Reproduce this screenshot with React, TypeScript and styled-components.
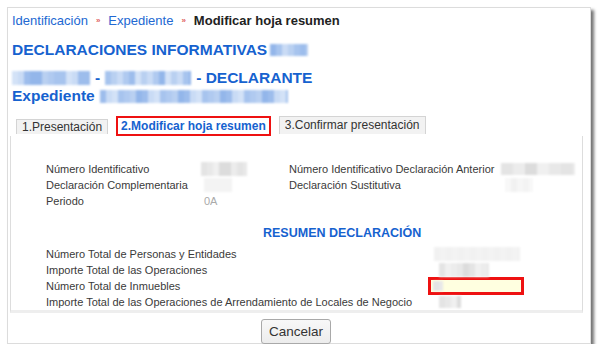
import React from "react"
import styled, { createGlobalStyle } from "styled-components"

const GlobalStyle = createGlobalStyle`
  html, body {
    margin: 0;
    padding: 0;
    background: #ffffff;
    font-family: "Liberation Sans", Arial, sans-serif;
  }
`

const BLUE = "#1662cf"

const blueTones = ["#b9d0f1", "#a7c4ee", "#c9dbf5", "#93b6ea", "#b0caf0", "#d3e2f7", "#9dbdec"]
const grayTones = ["#e4e4e4", "#ececec", "#dcdcdc", "#f0f0f0", "#e8e8e8"]
const faintTones = ["#f6f6f6", "#f3f3f3", "#f8f8f8", "#f1f1f1"]

const tones = { blue: blueTones, gray: grayTones, faint: faintTones }

const Blur: React.FC<{ w: number; h?: number; tone: "blue" | "gray" | "faint"; seed?: number }> = ({
  w,
  h = 14,
  tone,
  seed = 1,
}) => {
  const list = tones[tone]
  const count = Math.ceil(w / 6)
  return (
    <BlurBox $w={w} $h={h}>
      {new Array(count).fill(0).map((_v, i) => (
        <BlurCell key={i} style={{ background: list[(i * 3 + seed * 5 + ((i * seed) % 4)) % list.length] }} />
      ))}
    </BlurBox>
  )
}

const Arrow = () => <Sep>»</Sep>

export default function App() {
  return (
    <>
      <GlobalStyle />
      <Frame>
        <Header>
          <Crumbs>
            <CrumbLink>Identificación</CrumbLink>
            <Arrow />
            <CrumbLink>Expediente</CrumbLink>
            <Arrow />
            <CrumbCurrent>Modificar hoja resumen</CrumbCurrent>
          </Crumbs>
          <Title>
            DECLARACIONES INFORMATIVAS <Blur w={38} h={12} tone='blue' seed={2} />
          </Title>
          <SubTitle $top='10px'>
            <Blur w={78} h={14} tone='blue' seed={1} />
            <span>-</span>
            <Blur w={86} h={14} tone='blue' seed={3} />
            <span>- DECLARANTE</span>
          </SubTitle>
          <SubTitle $top='0px'>
            <span>Expediente</span>
            <Blur w={188} h={13} tone='blue' seed={4} />
          </SubTitle>
        </Header>

        <Tabs>
          <Tab $h='14px'>1.Presentación</Tab>
          <ActiveTab>2.Modificar hoja resumen</ActiveTab>
          <Tab $h='17px'>3.Confirmar presentación</Tab>
        </Tabs>

        <Panel>
          <InfoGrid>
            <Label>Número Identificativo</Label>
            <Value>
              <Blur w={46} h={14} tone='gray' seed={1} />
            </Value>
            <Label>Número Identificativo Declaración Anterior</Label>
            <Value $shift='6px'>
              <Blur w={74} h={12} tone='gray' seed={2} />
            </Value>

            <Label>Declaración Complementaria</Label>
            <Value $shift='3px'>
              <Blur w={28} h={14} tone='faint' seed={1} />
            </Value>
            <Label>Declaración Sustitutiva</Label>
            <Value $shift='10px'>
              <Blur w={28} h={14} tone='faint' seed={2} />
            </Value>

            <Label>Periodo</Label>
            <Value $shift='3px'>
              <Muted>0A</Muted>
            </Value>
            <Label />
            <Value />
          </InfoGrid>

          <SectionTitle>RESUMEN DECLARACIÓN</SectionTitle>

          <SummaryGrid>
            <Label>Número Total de Personas y Entidades</Label>
            <Value $shift='3px'>
              <Blur w={86} h={14} tone='faint' seed={3} />
            </Value>
            <Label>Importe Total de las Operaciones</Label>
            <Value $shift='8px'>
              <Blur w={50} h={14} tone='gray' seed={4} />
            </Value>
            <Label>Número Total de Inmuebles</Label>
            <Highlight>
              <Blur w={10} h={10} tone='gray' seed={1} />
            </Highlight>
            <Label>Importe Total de las Operaciones de Arrendamiento de Locales de Negocio</Label>
            <Value $shift='8px'>
              <Blur w={22} h={12} tone='gray' seed={5} />
            </Value>
          </SummaryGrid>
        </Panel>

        <Footer>
          <Button>Cancelar</Button>
        </Footer>
      </Frame>
    </>
  )
}

const Frame = styled.div`
  width: 584px;
  height: 337px;
  margin: 7px 0 0 7px;
  border: 1px solid #dcdcdc;
  box-shadow: 3px 3px 3px rgba(0, 0, 0, 0.55);
  background: #ffffff;
  display: flex;
  flex-direction: column;
  box-sizing: border-box;
`
const Header = styled.div`
  padding: 5px 0 0 4px;
`
const Crumbs = styled.div`
  display: flex;
  align-items: center;
  height: 16px;
  font-size: 13px;
  line-height: 16px;
`
const CrumbLink = styled.span`
  color: #2268d2;
`
const CrumbCurrent = styled.span`
  color: #222222;
  font-weight: bold;
`
const Sep = styled.span`
  color: #e06060;
  font-size: 8px;
  font-weight: bold;
  margin: 0 8px 0 8px;
`
const Title = styled.div`
  display: flex;
  align-items: center;
  column-gap: 3px;
  margin-top: 11px;
  height: 19px;
  font-size: 15.5px;
  font-weight: bold;
  color: ${BLUE};
`
const SubTitle = styled.div<{ $top: string }>`
  display: flex;
  align-items: center;
  column-gap: 5px;
  margin-top: ${({ $top }) => $top};
  height: 18px;
  font-size: 15.5px;
  font-weight: bold;
  color: ${BLUE};
`
const BlurBox = styled.span<{ $w: number; $h: number }>`
  display: inline-flex;
  width: ${({ $w }) => $w}px;
  height: ${({ $h }) => $h}px;
  overflow: hidden;
  filter: blur(0.9px);
`
const BlurCell = styled.span`
  flex: 1 0 6px;
  height: 100%;
`
const Tabs = styled.div`
  display: flex;
  align-items: flex-end;
  column-gap: 8px;
  margin: 11px 0 0 8px;
  height: 20px;
`
const Tab = styled.div<{ $h: string }>`
  height: ${({ $h }) => $h};
  line-height: ${({ $h }) => $h};
  padding: 0 5px;
  background: #f2f2f2;
  border: 1px solid #d4d4d4;
  border-bottom: none;
  font-size: 12px;
  color: #333333;
  margin-bottom: 2px;
`
const ActiveTab = styled.div`
  height: 16px;
  line-height: 16px;
  padding: 0 3px;
  border: 2px solid #ee1111;
  font-size: 12px;
  font-weight: bold;
  color: ${BLUE};
`
const Panel = styled.div`
  margin: 0 7px 0 2px;
  height: 172px;
  padding: 25px 0 0 35px;
  border-left: 1px solid #dddddd;
  border-right: 1px solid #dddddd;
  border-bottom: 3px solid #eeeeee;
  box-sizing: content-box;
`
const InfoGrid = styled.div`
  display: grid;
  grid-template-columns: 155px 88px 206px auto;
  grid-auto-rows: 16px;
  align-items: center;
`
const Label = styled.div`
  font-size: 11px;
  color: #3a3a3a;
  white-space: nowrap;
`
const Value = styled.div<{ $shift?: string }>`
  display: flex;
  align-items: center;
  margin-left: ${({ $shift }) => $shift || "0px"};
`
const Muted = styled.span`
  font-size: 11px;
  color: #aaaaaa;
`
const SectionTitle = styled.div`
  margin: 16px 0 5px 217px;
  height: 16px;
  line-height: 16px;
  font-size: 12.5px;
  font-weight: bold;
  color: ${BLUE};
`
const SummaryGrid = styled.div`
  display: grid;
  grid-template-columns: 385px auto;
  grid-auto-rows: 16px;
  align-items: center;
`
const Highlight = styled.div`
  width: 88px;
  height: 12px;
  margin-left: -3px;
  padding: 0 0 0 2px;
  border: 3px solid #ee1111;
  background: #ffffe0;
  display: flex;
  align-items: center;
`
const Footer = styled.div`
  display: flex;
  justify-content: center;
  padding: 6px 6px 0 0;
`
const Button = styled.div`
  height: 23px;
  line-height: 23px;
  padding: 0 7px;
  border: 1px solid #a9a9a9;
  border-radius: 3px;
  background: linear-gradient(#f8f8f8, #ececec);
  font-size: 13.5px;
  color: #333333;
`
